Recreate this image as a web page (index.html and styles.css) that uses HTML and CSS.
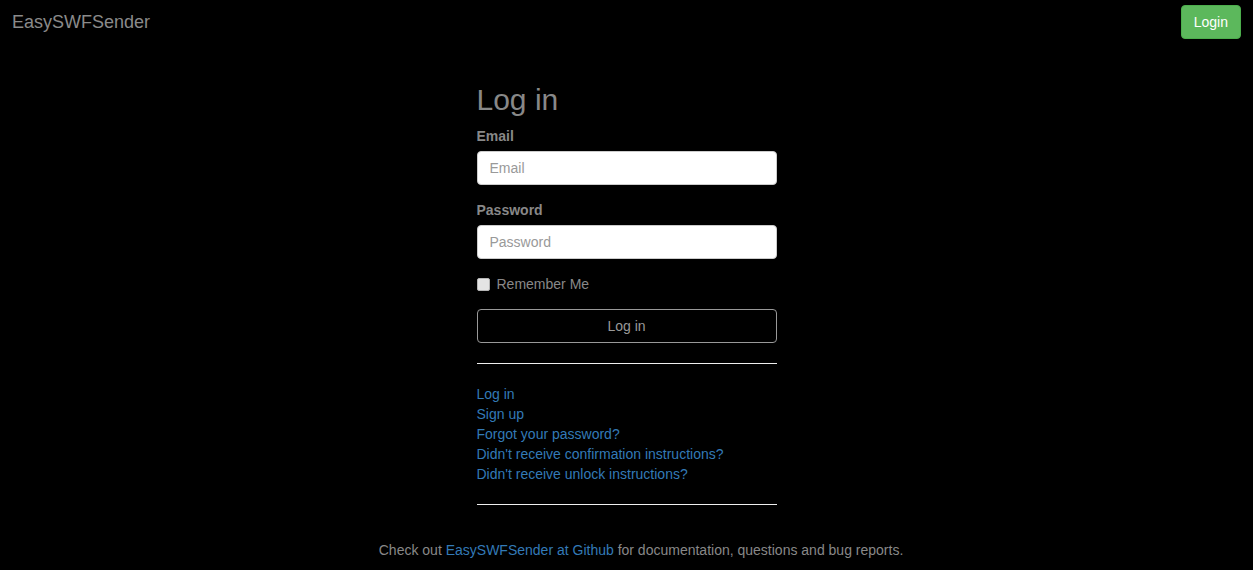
FILE: index.html
```html
<!DOCTYPE html>
<html>
<head>
<meta charset="utf-8">
<title>EasySWFSender</title>
<link rel="stylesheet" href="styles.css">
</head>
<body>
<nav class="navbar">
  <a class="brand" href="#">EasySWFSender</a>
  <a class="btn-login" href="#">Login</a>
</nav>
<main class="page">
  <div class="panel">
    <h2 class="title">Log in</h2>
    <form class="form">
      <div class="group">
        <label class="label" for="email">Email</label>
        <input class="input" id="email" type="email" placeholder="Email">
      </div>
      <div class="group">
        <label class="label" for="password">Password</label>
        <input class="input" id="password" type="password" placeholder="Password">
      </div>
      <div class="check">
        <input class="checkbox" type="checkbox" id="remember">
        <label class="check-label" for="remember">Remember Me</label>
      </div>
      <button class="btn-submit" type="button">Log in</button>
    </form>
    <hr class="rule">
    <div class="links">
      <a href="#">Log in</a>
      <a href="#">Sign up</a>
      <a href="#">Forgot your password?</a>
      <a href="#">Didn't receive confirmation instructions?</a>
      <a href="#">Didn't receive unlock instructions?</a>
    </div>
    <hr class="rule">
  </div>
</main>
<footer class="footer">
  Check out <a href="#">EasySWFSender at Github</a> for documentation, questions and bug reports.
</footer>
</body>
</html>
```
FILE: styles.css
```css
* { box-sizing: border-box; }
html, body { margin: 0; padding: 0; background: #000; }
body {
  font-family: "Liberation Sans", Arial, Helvetica, sans-serif;
  font-size: 14px;
  line-height: 20px;
  color: #888;
}
a { color: #337ab7; text-decoration: none; }

.navbar {
  height: 44px;
  display: flex;
  align-items: center;
  justify-content: space-between;
  padding: 0 12px;
}
.brand {
  color: #8a8a8a;
  font-size: 18px;
  line-height: 20px;
}
.btn-login {
  display: block;
  background: #5cb85c;
  color: #fff;
  border: 1px solid #4cae4c;
  border-radius: 4px;
  padding: 6px 12px;
  line-height: 20px;
  font-size: 14px;
}

.page {
  display: flex;
  justify-content: center;
  padding-top: 39px;
}
.panel { width: 300px; }
.title {
  margin: 0 0 10px;
  font-size: 30px;
  line-height: 33px;
  font-weight: 400;
  color: #888;
}
.group { margin-bottom: 15px; }
.label {
  display: block;
  font-weight: 700;
  margin-bottom: 5px;
  color: #888;
}
.input {
  display: block;
  width: 100%;
  height: 34px;
  padding: 6px 12px;
  font-family: inherit;
  font-size: 14px;
  line-height: 20px;
  color: #555;
  background: #fff;
  border: 1px solid #ccc;
  border-radius: 4px;
}
.input::placeholder { color: #999; }
.check {
  display: flex;
  align-items: center;
  height: 20px;
  margin-bottom: 15px;
}
.checkbox {
  appearance: none;
  -webkit-appearance: none;
  margin: 0 7px 0 0;
  width: 13px;
  height: 13px;
  background: #e4e4e4;
  border: 1px solid #b5b5b5;
  border-radius: 2px;
}
.check-label { color: #888; }
.btn-submit {
  display: block;
  width: 100%;
  height: 34px;
  padding: 6px 12px;
  font-family: inherit;
  font-size: 14px;
  line-height: 20px;
  color: #999;
  background: #000;
  border: 1px solid #999;
  border-radius: 4px;
}
.rule {
  margin: 20px 0;
  border: 0;
  border-top: 1px solid #eee;
}
.links { display: flex; flex-direction: column; align-items: flex-start; }
.footer {
  text-align: center;
  padding-top: 15px;
  padding-left: 29px;
}
```
